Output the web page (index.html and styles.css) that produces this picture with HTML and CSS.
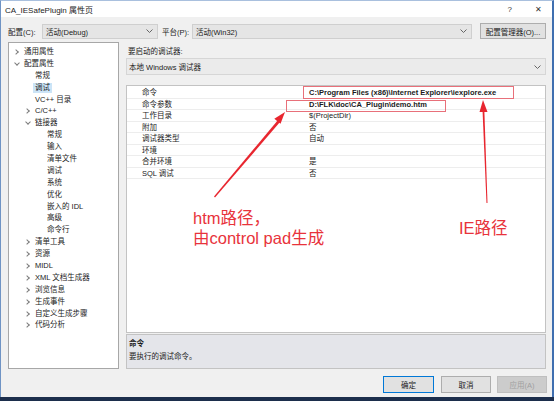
FILE: index.html
```html
<!DOCTYPE html>
<html lang="zh-CN">
<head>
    <meta charset="UTF-8">
    <title>CA_IESafePlugin 属性页</title>
    <link rel="stylesheet" href="styles.css">
</head>
<body>
    <div class="window">
        <div class="titlebar">
            <span class="title">CA_IESafePlugin 属性页</span>
            <span class="tb-btn help">?</span>
            <span class="tb-btn close">✕</span>
        </div>

        <div class="config-row">
            <span class="cfg-label">配置(C):</span>
            <div class="combo combo-config">活动(Debug)<svg class="chev" width="7" height="4" viewBox="0 0 7 4"><polyline points="0.5,0.5 3.5,3.5 6.5,0.5" fill="none" stroke="#666" stroke-width="1"/></svg></div>
            <span class="cfg-label platform">平台(P):</span>
            <div class="combo combo-platform">活动(Win32)<svg class="chev" width="7" height="4" viewBox="0 0 7 4"><polyline points="0.5,0.5 3.5,3.5 6.5,0.5" fill="none" stroke="#666" stroke-width="1"/></svg></div>
            <button class="btn btn-manager">配置管理器(O)...</button>
        </div>

        <div class="main">
            <ul class="tree">
                <li class="lvl0"><span class="twisty closed"></span>通用属性</li>
                <li class="lvl0"><span class="twisty open"></span>配置属性</li>
                <li class="lvl1"><span class="twisty"></span>常规</li>
                <li class="lvl1"><span class="twisty"></span><span class="selected">调试</span></li>
                <li class="lvl1"><span class="twisty"></span>VC++ 目录</li>
                <li class="lvl1"><span class="twisty closed"></span>C/C++</li>
                <li class="lvl1"><span class="twisty open"></span>链接器</li>
                <li class="lvl2"><span class="twisty"></span>常规</li>
                <li class="lvl2"><span class="twisty"></span>输入</li>
                <li class="lvl2"><span class="twisty"></span>清单文件</li>
                <li class="lvl2"><span class="twisty"></span>调试</li>
                <li class="lvl2"><span class="twisty"></span>系统</li>
                <li class="lvl2"><span class="twisty"></span>优化</li>
                <li class="lvl2"><span class="twisty"></span>嵌入的 IDL</li>
                <li class="lvl2"><span class="twisty"></span>高级</li>
                <li class="lvl2"><span class="twisty"></span>命令行</li>
                <li class="lvl1"><span class="twisty closed"></span>清单工具</li>
                <li class="lvl1"><span class="twisty closed"></span>资源</li>
                <li class="lvl1"><span class="twisty closed"></span>MIDL</li>
                <li class="lvl1"><span class="twisty closed"></span>XML 文档生成器</li>
                <li class="lvl1"><span class="twisty closed"></span>浏览信息</li>
                <li class="lvl1"><span class="twisty closed"></span>生成事件</li>
                <li class="lvl1"><span class="twisty closed"></span>自定义生成步骤</li>
                <li class="lvl1"><span class="twisty closed"></span>代码分析</li>
            </ul>

            <div class="content">
                <div class="debugger-label">要启动的调试器:</div>
                <div class="combo combo-debugger">本地 Windows 调试器<svg class="chev" width="7" height="4" viewBox="0 0 7 4"><polyline points="0.5,0.5 3.5,3.5 6.5,0.5" fill="none" stroke="#666" stroke-width="1"/></svg></div>

                <div class="grid">
                    <div class="row"><span class="key">命令</span><span class="val bold">C:\Program Files (x86)\Internet Explorer\iexplore.exe</span></div>
                    <div class="row"><span class="key">命令参数</span><span class="val bold">D:\FLK\doc\CA_Plugin\demo.htm</span></div>
                    <div class="row"><span class="key">工作目录</span><span class="val">$(ProjectDir)</span></div>
                    <div class="row"><span class="key">附加</span><span class="val">否</span></div>
                    <div class="row"><span class="key">调试器类型</span><span class="val">自动</span></div>
                    <div class="row"><span class="key">环境</span><span class="val"></span></div>
                    <div class="row"><span class="key">合并环境</span><span class="val">是</span></div>
                    <div class="row"><span class="key">SQL 调试</span><span class="val">否</span></div>
                </div>

                <div class="desc">
                    <div class="desc-title">命令</div>
                    <div class="desc-text">要执行的调试命令。</div>
                </div>
            </div>
        </div>

        <div class="footer">
            <button class="btn btn-ok">确定</button>
            <button class="btn">取消</button>
            <button class="btn" disabled>应用(A)</button>
        </div>
    </div>

    <!-- red annotations drawn over the dialog -->
    <svg class="annot" width="554" height="401" viewBox="0 0 554 401">
        <rect x="303.5" y="86.5" width="210" height="12" fill="none" stroke="#e8707a" stroke-width="1"/>
        <rect x="286.5" y="100.5" width="159" height="11" fill="none" stroke="#e8707a" stroke-width="1"/>
        <polygon points="215,197.5 214,196.5 278,120 280,122" fill="#e8262f"/>
        <polygon points="285,112 280.5,123.8 274.3,118.8" fill="#e8262f"/>
        <polygon points="487.5,203 486.5,203 482.6,112 484.4,112" fill="#e8262f"/>
        <polygon points="483,100 487.5,112 479.5,112" fill="#e8262f"/>
    </svg>
    <div class="note note-htm">htm路径，<br>由control pad生成</div>
    <div class="note note-ie">IE路径</div>
</body>
</html>
```

FILE: styles.css
```css
body {
    margin: 0;
    width: 554px;
    height: 401px;
    position: relative;
    overflow: hidden;
    background-color: #1c2e4c;
    font-family: "Liberation Sans", "Noto Sans CJK SC", sans-serif;
    font-size: 7.5px;
    color: #1b1b1b;
}
.window {
    height: 397px;
    box-sizing: border-box;
    background-color: #f0f0f0;
    border-top: 1px solid #a9c0de;
    border-left: 1px solid #6f93c4;
    border-right: 2px solid #3f6fb0;
    display: flex;
    flex-direction: column;
}
.titlebar {
    height: 16px;
    background-color: #ffffff;
    display: flex;
    align-items: center;
    padding-left: 4px;
    font-size: 8px;
}
.title {
    flex: 1;
}
.tb-btn {
    color: #333;
    font-size: 8px;
}
.help {
    margin-right: 23px;
}
.close {
    margin-right: 10px;
}
.config-row {
    margin-top: 6px;
    height: 16px;
    display: flex;
    align-items: center;
    padding-left: 7px;
}
.cfg-label {
    width: 34px;
}
.cfg-label.platform {
    width: 30px;
    margin-left: 4px;
}
.combo {
    height: 15px;
    box-sizing: border-box;
    background-color: #e5e5e5;
    border: 1px solid #cfcfcf;
    display: flex;
    align-items: center;
    justify-content: space-between;
    padding: 0 4px 0 3px;
}
.combo-config {
    width: 116px;
}
.combo-platform {
    width: 280px;
}
.combo-debugger {
    height: 17px;
    background-color: #ebebeb;
    border-color: #d6d6d6;
    padding-left: 2px;
}
.chev {
    display: block;
}
.btn {
    font-family: inherit;
    font-size: 7.5px;
    color: #1b1b1b;
    background-color: #e1e1e1;
    border: 1px solid #adadad;
    height: 17px;
    padding: 0;
    margin: 0;
}
.btn-manager {
    width: 66px;
    height: 16px;
    margin-left: 8px;
}
.main {
    margin-top: 3px;
    height: 327px;
    display: flex;
    padding-left: 7px;
    gap: 7px;
}
.tree {
    list-style: none;
    margin: 0;
    width: 111px;
    box-sizing: border-box;
    padding: 3px 0 0 0;
    background-color: #ffffff;
    border: 1px solid #a7a7a7;
}
.tree li {
    height: 11.9px;
    line-height: 11.9px;
    display: flex;
    align-items: center;
    white-space: nowrap;
}
.tree .lvl0 {
    padding-left: 3px;
}
.tree .lvl1 {
    padding-left: 14px;
}
.tree .lvl2 {
    padding-left: 26px;
}
.twisty {
    width: 12px;
    height: 11px;
    flex: none;
    position: relative;
}
.twisty.closed::before,
.twisty.open::before {
    content: "";
    position: absolute;
    width: 3px;
    height: 3px;
    border-right: 1px solid #7c7c7c;
    border-bottom: 1px solid #7c7c7c;
}
.twisty.closed::before {
    left: 2px;
    top: 3.5px;
    transform: rotate(-45deg);
}
.twisty.open::before {
    left: 3px;
    top: 2.5px;
    transform: rotate(45deg);
}
.selected {
    background-color: #cce4f7;
    padding: 0 2px;
    margin-left: -2px;
    line-height: 10px;
}
.content {
    width: 420px;
    display: flex;
    flex-direction: column;
}
.debugger-label {
    padding-top: 4px;
    height: 12px;
    line-height: 12px;
    margin-left: 2px;
}
.grid {
    margin-top: 10px;
    height: 248px;
    box-sizing: border-box;
    background-color: #ffffff;
    border: 1px solid #c3c3c3;
    padding-top: 1px;
}
.row {
    height: 11.5px;
    line-height: 11px;
    display: flex;
    border-bottom: 1px solid #ededed;
    box-sizing: border-box;
}
.key {
    width: 166px;
    padding-left: 15px;
    flex: none;
}
.val {
    padding-left: 1px;
    white-space: nowrap;
}
.bold {
    font-weight: bold;
}
.desc {
    margin-top: 1px;
    height: 35px;
    box-sizing: border-box;
    background-color: #e4e5ea;
    border: 1px solid #c3c3c3;
    padding: 2px 0 0 2px;
    line-height: 13px;
}
.desc-title {
    font-weight: bold;
}
.footer {
    margin-top: 7px;
    display: flex;
    justify-content: flex-end;
    gap: 6px;
    padding-right: 5px;
}
.footer .btn {
    width: 50px;
}
.footer .btn-ok {
    width: 51px;
    border-color: #0078d7;
    margin-right: 1px;
}
.footer .btn:disabled {
    background-color: #cccccc;
    border-color: #bfbfbf;
    color: #a0a0a0;
}
.annot {
    position: absolute;
    left: 0;
    top: 0;
}
.note {
    position: absolute;
    color: #e8333b;
    font-family: "Liberation Sans", "Noto Sans CJK SC", sans-serif;
    font-size: 16.5px;
    line-height: 20px;
    white-space: nowrap;
}
.note-htm {
    left: 193px;
    top: 208px;
}
.note-ie {
    left: 459px;
    top: 218px;
}
```
